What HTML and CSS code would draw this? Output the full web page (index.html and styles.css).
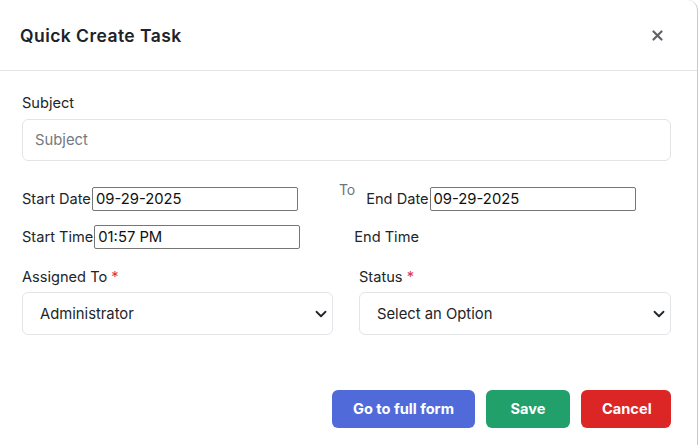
FILE: index.html
```html
<!DOCTYPE html>
<html lang="en">
<head>
    <meta charset="UTF-8">
    <meta name="viewport" content="width=device-width, initial-scale=1.0">
    <title>Quick Create Task</title>
    <link rel="stylesheet" href="styles.css">
</head>
<body>
    <div class="modal">
        <div class="modal-header">
            <h5 class="modal-title">Quick Create Task</h5>
            <button class="btn-close" aria-label="Close">
                <svg width="11" height="11" viewBox="0 0 11 11">
                    <path d="M1.5 1.5 L9.5 9.5 M9.5 1.5 L1.5 9.5" stroke="#5f6368" stroke-width="2.2" stroke-linecap="round"/>
                </svg>
            </button>
        </div>

        <div class="modal-body">
            <label class="form-label">Subject</label>
            <input type="text" class="form-control" placeholder="Subject">

            <div class="date-row">
                <div class="date-field start">
                    <span>Start Date</span><input type="text" class="plain-input" value="09-29-2025">
                </div>
                <span class="to-label">To</span>
                <div class="date-field end">
                    <span>End Date</span><input type="text" class="plain-input" value="09-29-2025">
                </div>
            </div>

            <div class="time-row">
                <div class="date-field start">
                    <span>Start Time</span><input type="text" class="plain-input time" value="01:57 PM">
                </div>
                <div class="date-field end-time">
                    <span>End Time</span>
                </div>
            </div>

            <div class="select-row">
                <div class="select-col">
                    <label class="form-label">Assigned To <span class="req">*</span></label>
                    <select class="form-select">
                        <option>Administrator</option>
                    </select>
                </div>
                <div class="select-col">
                    <label class="form-label">Status <span class="req">*</span></label>
                    <select class="form-select">
                        <option>Select an Option</option>
                    </select>
                </div>
            </div>
        </div>

        <div class="modal-footer">
            <button class="btn btn-blue">Go to full form</button>
            <button class="btn btn-green">Save</button>
            <button class="btn btn-red">Cancel</button>
        </div>
    </div>
</body>
</html>
```

FILE: styles.css
```css
body {
    margin: 0;
    padding: 0;
    font-family: Inter, "Noto Sans", Arial, sans-serif;
    color: #212529;
    background-color: #ffffff;
}

.modal {
    width: 698px;
    height: 445px;
    border-right: 1px solid #c9c9c9;
    border-top-right-radius: 10px;
    background-color: #fff;
    box-sizing: border-box;
    overflow: hidden;
}

.modal-header {
    height: 70px;
    display: flex;
    align-items: center;
    justify-content: space-between;
    padding: 0 34px 0 20px;
    border-bottom: 1px solid #e3e3e3;
}

.modal-title {
    margin: 0;
    font-size: 17.5px;
    font-weight: 600;
    color: #1e2229;
    letter-spacing: 0.45px;
}

.btn-close {
    border: none;
    background: none;
    padding: 0;
    display: flex;
    cursor: pointer;
    margin-top: 1px;
}

.modal-body {
    padding: 22px 26px 0 22px;
}

.form-label {
    display: block;
    font-size: 14.6px;
    line-height: 21px;
    margin-bottom: 5px;
    color: #212529;
}

.req {
    color: #dc3545;
}

.form-control {
    width: 100%;
    height: 42px;
    box-sizing: border-box;
    border: 1px solid #e2e4e7;
    border-radius: 6px;
    padding: 0 12px;
    font-family: inherit;
    font-size: 14.8px;
    color: #212529;
}

.form-control::placeholder {
    color: #737980;
}

.date-row {
    display: flex;
    align-items: flex-start;
    margin-top: 26px;
    height: 26px;
}

.time-row {
    display: flex;
    align-items: center;
    margin-top: 12px;
}

.date-field {
    display: flex;
    align-items: center;
    font-size: 14.6px;
    color: #212529;
}

.plain-input {
    width: 206px;
    height: 24px;
    box-sizing: border-box;
    border: 1px solid #767676;
    border-radius: 2px;
    padding: 0 3px;
    font-family: inherit;
    font-size: 14.8px;
    color: #111;
    margin-left: 1px;
}

.to-label {
    font-size: 14px;
    color: #6c757d;
    margin-left: 41px;
    margin-top: -6px;
}

.date-field.end {
    margin-left: 11px;
}

.date-field.end-time {
    margin-left: 54px;
}

.select-row {
    display: flex;
    gap: 26px;
    margin-top: 18px;
}

.select-row .form-label {
    margin-bottom: 4px;
}

.select-col {
    flex: 1;
}

.select-col:last-child {
    flex: 0 0 312px;
}

.form-select {
    width: 100%;
    height: 43px;
    box-sizing: border-box;
    border: 1px solid #e2e4e7;
    border-radius: 6px;
    padding: 0 36px 0 17px;
    font-family: inherit;
    font-size: 14.8px;
    color: #212529;
    background-color: #fff;
    appearance: none;
    -webkit-appearance: none;
    background-image: url("data:image/svg+xml,%3csvg xmlns='http://www.w3.org/2000/svg' viewBox='0 0 16 16'%3e%3cpath fill='none' stroke='%23212529' stroke-linecap='round' stroke-linejoin='round' stroke-width='2.4' d='m2 5 6 6 6-6'/%3e%3c/svg%3e");
    background-repeat: no-repeat;
    background-position: right 4px center;
    background-size: 14px 12px;
}

.modal-footer {
    display: flex;
    justify-content: flex-end;
    gap: 11px;
    padding: 55px 26px 0 0;
}

.btn {
    height: 38px;
    border: none;
    border-radius: 6px;
    padding: 0 21px;
    font-family: inherit;
    font-size: 14.6px;
    font-weight: 700;
    color: #fff;
    cursor: pointer;
}

.btn-blue {
    background-color: #506bd9;
}

.btn-green {
    background-color: #22a06b;
    width: 84px;
}

.btn-red {
    background-color: #dc2626;
    width: 90px;
}
```
